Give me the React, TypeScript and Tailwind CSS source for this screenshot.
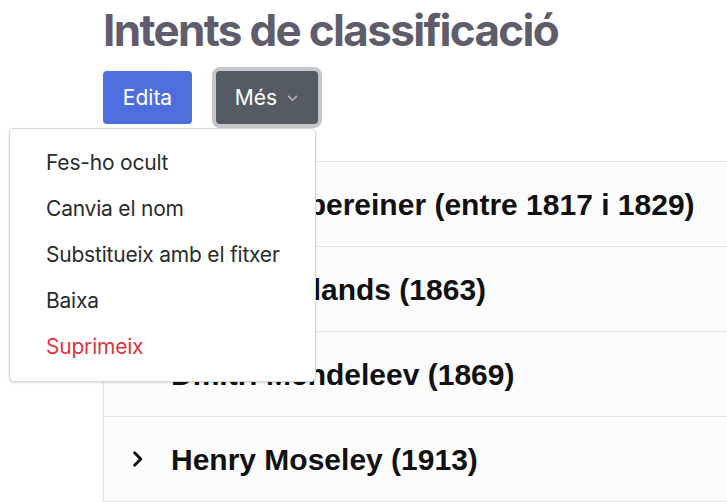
import React from "react";

const items = [
  "Johan Döbereiner (entre 1817 i 1829)",
  "John Newlands (1863)",
  "Dmitri Mendeleev (1869)",
  "Henry Moseley (1913)",
];

const menu = [
  { label: "Fes-ho ocult", danger: false },
  { label: "Canvia el nom", danger: false },
  { label: "Substitueix amb el fitxer", danger: false },
  { label: "Baixa", danger: false },
  { label: "Suprimeix", danger: true },
];

const Chevron: React.FC<{ className?: string }> = ({ className }) => (
  <svg viewBox="0 0 16 16" className={className} fill="none" stroke="currentColor" strokeWidth="2.6" strokeLinecap="round" strokeLinejoin="round">
    <path d="M5 2.5 10.5 8 5 13.5" />
  </svg>
);

const App: React.FC = () => {
  return (
    <div className="min-h-[502px] w-[727px] overflow-hidden bg-white font-['Inter',sans-serif]">
      <div className="pl-[103px] pt-[4px]">
        <h1 className="text-[44px] leading-[53px] font-bold tracking-[-0.038em] text-[#5f5d6b]">
          Intents de classificació
        </h1>

        <div className="mt-[14px] flex items-center gap-[24px]">
          <button className="h-[53px] w-[89px] rounded-[4px] bg-[#4f6ede] text-[21px] text-white">
            Edita
          </button>
          <div className="relative">
            <button className="flex h-[53px] w-[102px] items-center justify-center gap-[9px] rounded-[4px] bg-[#555b62] text-[21px] text-white ring-4 ring-[#c5c8cb]">
              Més
              <svg viewBox="0 0 12 12" className="h-[13px] w-[13px] text-[#b4b8bd]" fill="none" stroke="currentColor" strokeWidth="1.4">
                <path d="M2 4.5 6 8.5l4-4" />
              </svg>
            </button>

            <div className="absolute right-[2px] top-full z-10 mt-[4px] w-[307px] rounded-[5px] border border-[#d6d6d6] bg-white py-[11px] shadow-sm">
              {menu.map((m) => (
                <div
                  key={m.label}
                  className={`h-[46px] pl-[36px] text-[21px] leading-[46px] tracking-[-0.01em] ${m.danger ? "text-[#dc3545]" : "text-[#2a2b2e]"}`}
                >
                  {m.label}
                </div>
              ))}
            </div>
          </div>
        </div>

        <div className="mt-[37px] w-[700px] border-l border-t border-[#e6e6e6] font-['Liberation_Sans',Arial,sans-serif]">
          {items.map((t) => (
            <div key={t} className="flex h-[85px] items-center border-b border-[#e6e6e6] bg-[#fcfcfc] pl-[25px]">
              <Chevron className="h-[18px] w-[18px] text-[#111]" />
              <span className="ml-[24px] whitespace-nowrap text-[30px] font-bold text-[#111]">{t}</span>
            </div>
          ))}
        </div>
      </div>
    </div>
  );
};

export default App;
